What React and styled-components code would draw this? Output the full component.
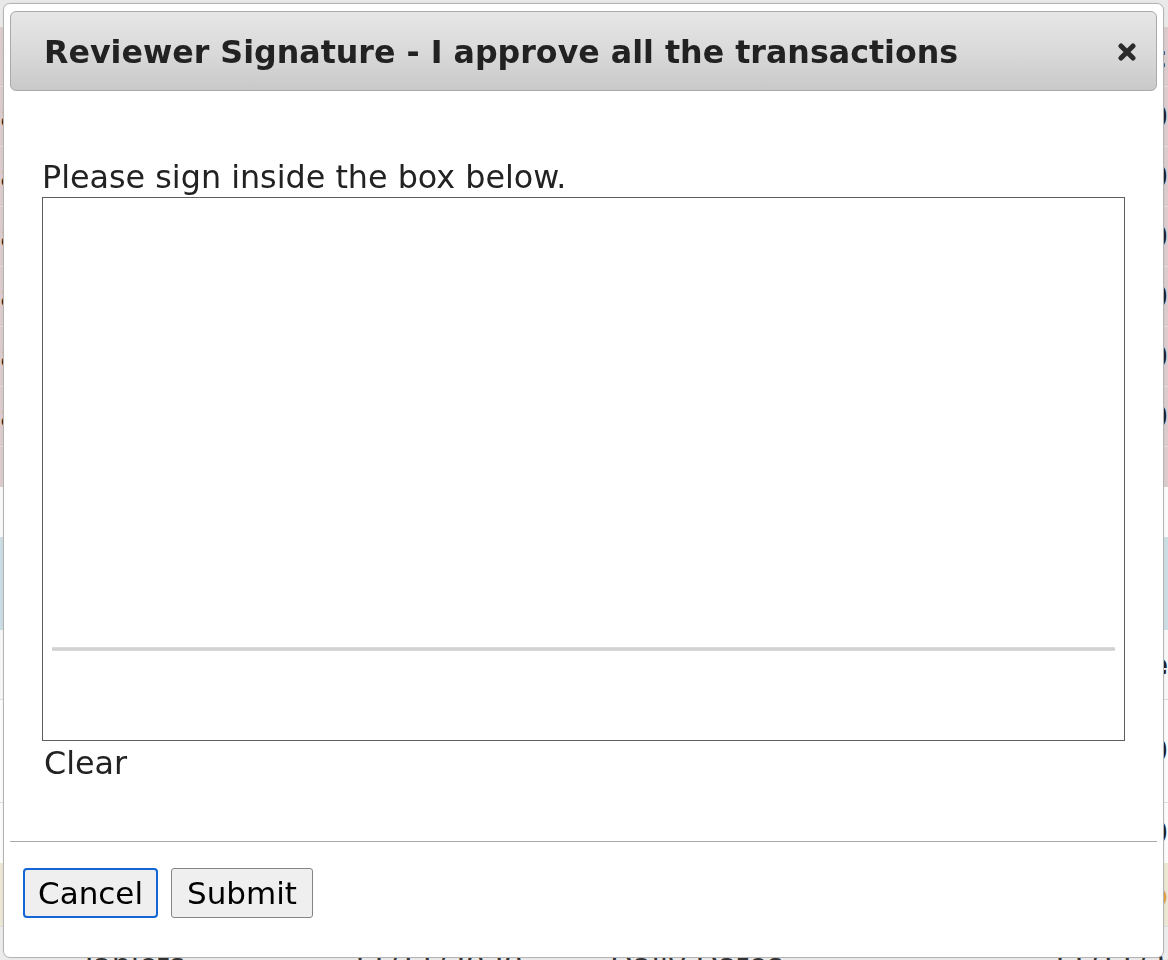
import React from "react";
import styled, { createGlobalStyle } from "styled-components";

const GlobalStyle = createGlobalStyle`
  html, body {
    margin: 0;
    padding: 0;
    width: 1168px;
    height: 960px;
    overflow: hidden;
    background: #ffffff;
  }
  * { box-sizing: border-box; }
`;

const FONT = `"DejaVu Sans", Verdana, "Liberation Sans", sans-serif`;

/* ---------- background page (mostly hidden by the dialog) ---------- */
const Page = styled.div`
  width: 1168px;
  height: 960px;
  display: flex;
  flex-direction: column;
  font-family: ${FONT};
  font-size: 30px;
  color: #222;
  overflow: hidden;
`;

const Band = styled.div`
  flex: 0 0 ${(p) => p.$h}px;
  background: ${(p) => p.$bg || "#ffffff"};
  border-bottom: ${(p) => (p.$line ? `1px solid ${p.$line}` : "none")};
  display: flex;
  align-items: center;
  justify-content: space-between;
`;

const EdgeText = styled.span`
  color: ${(p) => p.$color || "#222"};
  font-weight: ${(p) => (p.$bold ? 700 : 400)};
  line-height: 1;
`;

const BottomRow = styled.div`
  flex: 1;
  background: #ececec;
  display: grid;
  grid-template-columns: 270px 260px 440px 1fr;
  padding: 20px 0 0 80px;
  font-size: 30px;
  color: #333;
`;

/* ---------- dialog ---------- */
const Dialog = styled.div`
  position: fixed;
  left: 3px;
  top: 3px;
  width: 1161px;
  height: 955px;
  background: #ffffff;
  border: 1px solid #b4b4b4;
  border-radius: 7px;
  padding: 7px 6px 7px 6px;
  display: flex;
  flex-direction: column;
  font-family: ${FONT};
  color: #222;
  box-shadow: 0 0 2px rgba(0, 0, 0, 0.08);
`;

const TitleBar = styled.div`
  flex: 0 0 80px;
  border: 1px solid #aaaaaa;
  border-radius: 6px;
  background: linear-gradient(to bottom, #e6e6e6 0%, #dadada 50%, #c9c9c9 100%);
  display: flex;
  align-items: center;
  justify-content: space-between;
  padding: 2px 20px 0 33px;
`;

const Title = styled.span`
  font-weight: 700;
  font-size: 31.7px;
  color: #222;
  white-space: nowrap;
`;

const CloseButton = styled.button`
  border: none;
  background: transparent;
  padding: 0;
  width: 18px;
  height: 18px;
  display: flex;
  cursor: pointer;
  color: #2b2b2b;
`;

const Content = styled.div`
  flex: 1;
  padding: 67px 32px 0 32px;
  display: flex;
  flex-direction: column;
  font-size: 31.8px;
  line-height: 38px;
`;

const Instruction = styled.div`
  color: #222;
  white-space: nowrap;
`;

const SignaturePad = styled.div`
  margin-top: 1px;
  height: 544px;
  border: 1px solid #5e5e5e;
  background: #ffffff;
  display: flex;
  flex-direction: column;
  justify-content: flex-end;
  padding: 0 9px 89px 9px;
`;

const SignatureLine = styled.div`
  height: 4px;
  background: linear-gradient(to bottom, #dedede, #cdcdcd 50%, #dedede);
  border-radius: 1px;
`;

const ClearLink = styled.div`
  margin: 3px 0 0 2px;
  color: #222;
  cursor: pointer;
  align-self: flex-start;
`;

const ButtonPane = styled.div`
  flex: 0 0 109px;
  border-top: 1px solid #a9a9a9;
  padding: 26px 13px 0 13px;
  display: flex;
  align-items: flex-start;
  gap: 13px;
`;

const Button = styled.button`
  height: 50px;
  font-family: ${FONT};
  font-size: 31px;
  color: #000;
  background: #efefef;
  border: ${(p) => (p.$focused ? "2px solid #1466d6" : "1px solid #858585")};
  border-radius: ${(p) => (p.$focused ? "4px" : "3px")};
  padding: ${(p) => (p.$focused ? "0 13px" : "0 15px")};
  display: flex;
  align-items: center;
  cursor: pointer;
`;

const pinkRows = [1, 2, 3, 4, 5, 6];

export default function App() {
  return (
    <>
      <GlobalStyle />
      <Page>
        <Band $h={27} $bg="#e9e9e9" />
        <Band $h={60} $bg="#dccbcc" $line="#e6dada">
          <EdgeText>:</EdgeText>
          <EdgeText>:</EdgeText>
        </Band>
        {pinkRows.map((r) => (
          <Band key={r} $h={60} $bg="#dccbcc" $line="#e6dada">
            <EdgeText>a</EdgeText>
            <EdgeText>0</EdgeText>
          </Band>
        ))}
        <Band $h={40} $bg="#dccbcc" />
        <Band $h={50} $bg="#fafafa" />
        <Band $h={93} $bg="#cddde4" />
        <Band $h={70} $bg="#f7f7f7" $line="#dddddd">
          <EdgeText />
          <EdgeText $bold>e</EdgeText>
        </Band>
        <Band $h={103} $bg="#fbfbfb" $line="#dddddd">
          <EdgeText />
          <EdgeText>0</EdgeText>
        </Band>
        <Band $h={60} $bg="#fbfbfb">
          <EdgeText />
          <EdgeText>0</EdgeText>
        </Band>
        <Band $h={64} $bg="#ece6d4" $line="#dddddd">
          <EdgeText />
          <EdgeText $color="#e0a43a">●</EdgeText>
        </Band>
        <BottomRow>
          <span>Tablets</span>
          <span>11/11/2020</span>
          <span>Daily Dates</span>
          <span>11/11/20</span>
        </BottomRow>
      </Page>

      <Dialog role="dialog" aria-label="Reviewer Signature">
        <TitleBar>
          <Title>Reviewer Signature - I approve all the transactions</Title>
          <CloseButton aria-label="close">
            <svg width="18" height="18" viewBox="0 0 18 18">
              <path
                d="M3 3 L15 15 M15 3 L3 15"
                stroke="currentColor"
                strokeWidth="5"
                strokeLinecap="round"
                fill="none"
              />
            </svg>
          </CloseButton>
        </TitleBar>
        <Content>
          <Instruction>Please sign inside the box below.</Instruction>
          <SignaturePad>
            <SignatureLine />
          </SignaturePad>
          <ClearLink>Clear</ClearLink>
        </Content>
        <ButtonPane>
          <Button $focused>Cancel</Button>
          <Button>Submit</Button>
        </ButtonPane>
      </Dialog>
    </>
  );
}
